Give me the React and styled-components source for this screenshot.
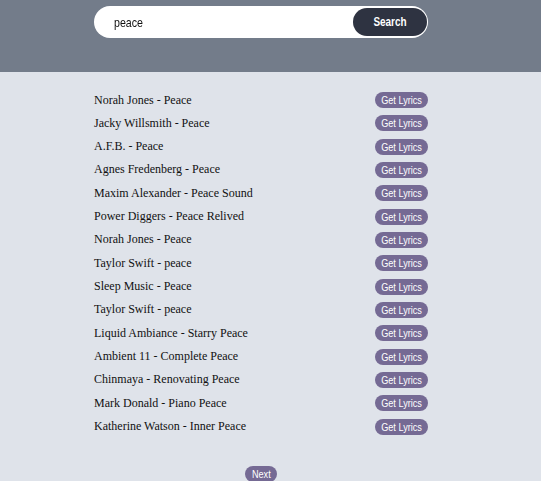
import React from "react";
import styled, { createGlobalStyle } from "styled-components";

const SANS = `"Liberation Sans", Arial, sans-serif`;

const Global = createGlobalStyle`
  html, body { margin: 0; padding: 0; }
  body { background: #dfe3ea; width: 541px; height: 481px; overflow: hidden; }
`;

const Header = styled.header`
  height: 72px;
  background: #737c8a;
  padding-top: 6px;
  box-sizing: border-box;
`;

const SearchForm = styled.form`
  width: 334px;
  height: 32px;
  margin-left: 94px;
  box-sizing: border-box;
  background: #fff;
  border-radius: 16px;
  display: flex;
  align-items: center;
  padding: 2px 1px 2px 20px;
`;

const InputWrap = styled.div`
  flex: 1;
  min-width: 0;
  overflow: hidden;
`;

/* the reference uses a narrow sans face: emulate it by condensing Liberation Sans */
const SearchInput = styled.input`
  display: block;
  width: 122%;
  border: none;
  outline: none;
  background: transparent;
  font-family: ${SANS};
  font-size: 13px;
  color: #111;
  padding: 0;
  transform: scaleX(0.82);
  transform-origin: left center;
`;

const Narrow = styled.span`
  display: inline-block;
  transform: scaleX(0.83);
  white-space: nowrap;
`;

const SearchButton = styled.button`
  width: 74px;
  height: 28px;
  border: none;
  border-radius: 14px;
  background: #2e3341;
  color: #fff;
  font-family: ${SANS};
  font-weight: bold;
  font-size: 12px;
  padding: 0;
  cursor: pointer;
`;

const Main = styled.main`
  width: 334px;
  margin-left: 94px;
  padding-top: 20px;
  display: flex;
  flex-direction: column;
  align-items: center;
`;

const List = styled.ul`
  list-style: none;
  margin: 0;
  padding: 0;
  width: 100%;
  display: flex;
  flex-direction: column;
  gap: 7.33px;
`;

const Row = styled.li`
  height: 16px;
  display: flex;
  align-items: center;
  justify-content: space-between;
`;

const SongTitle = styled.span`
  font-family: "Liberation Serif", "Times New Roman", serif;
  font-size: 12px;
  color: #111;
`;

const PillButton = styled.button`
  height: 16px;
  border: none;
  border-radius: 8px;
  background: #756a94;
  color: #fff;
  font-family: ${SANS};
  font-size: 11px;
  padding: 0;
  width: ${(p) => p.$w}px;
  overflow: hidden;
  cursor: pointer;
`;

const NextWrap = styled.div`
  margin-top: 31px;
  width: 100%;
  display: flex;
  justify-content: center;
`;

const songs = [
  "Norah Jones - Peace",
  "Jacky Willsmith - Peace",
  "A.F.B. - Peace",
  "Agnes Fredenberg - Peace",
  "Maxim Alexander - Peace Sound",
  "Power Diggers - Peace Relived",
  "Norah Jones - Peace",
  "Taylor Swift - peace",
  "Sleep Music - Peace",
  "Taylor Swift - peace",
  "Liquid Ambiance - Starry Peace",
  "Ambient 11 - Complete Peace",
  "Chinmaya - Renovating Peace",
  "Mark Donald - Piano Peace",
  "Katherine Watson - Inner Peace",
];

export default function App() {
  return (
    <>
      <Global />
      <Header>
        <SearchForm onSubmit={(e) => e.preventDefault()}>
          <InputWrap>
            <SearchInput defaultValue="peace" autoFocus />
          </InputWrap>
          <SearchButton type="submit">
            <Narrow>Search</Narrow>
          </SearchButton>
        </SearchForm>
      </Header>
      <Main>
        <List>
          {songs.map((s, i) => (
            <Row key={i}>
              <SongTitle>{s}</SongTitle>
              <PillButton $w={53}>
                <Narrow>Get Lyrics</Narrow>
              </PillButton>
            </Row>
          ))}
        </List>
        <NextWrap>
          <PillButton $w={32}>
            <Narrow>Next</Narrow>
          </PillButton>
        </NextWrap>
      </Main>
    </>
  );
}
